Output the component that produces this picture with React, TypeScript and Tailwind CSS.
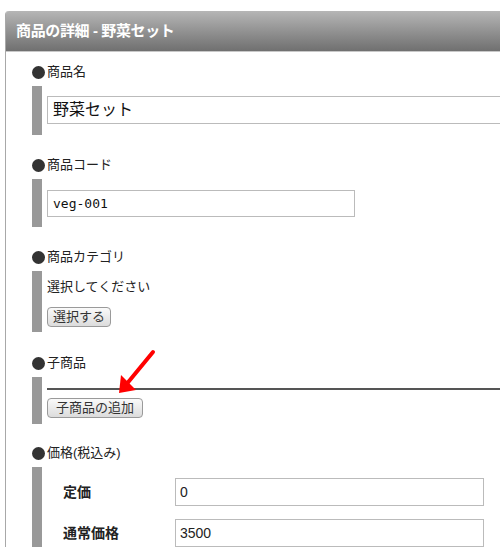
import React from 'react';

const font = { fontFamily: '"Liberation Sans", "Noto Sans CJK JP", sans-serif' };

const Label: React.FC<{ text: string }> = ({ text }) => (
  <div className="flex items-center h-[20px] text-[13px] text-[#222]">
    <span className="w-[13px] h-[13px] rounded-full bg-[#333] mr-[2px]" />
    <span>{text}</span>
  </div>
);

const Bar: React.FC<{ className?: string; children: React.ReactNode }> = ({ className, children }) => (
  <div className="flex mt-[4px]">
    <div className="w-[10px] bg-[#999] shrink-0" />
    <div className={`pl-[5px] flex-1 ${className ?? ''}`}>{children}</div>
  </div>
);

const Button: React.FC<{ text: string; width: string }> = ({ text, width }) => (
  <button
    className={`${width} h-[20px] border border-[#9a9a9a] rounded-[4px] bg-gradient-to-b from-[#fafafa] to-[#dcdcdc] text-[13px] text-[#333] leading-[18px] flex items-center justify-center`}
  >
    {text}
  </button>
);

const PriceRow: React.FC<{ label: string; value: string; first?: boolean }> = ({ label, value, first }) => (
  <div className={`flex items-center ${first ? '' : 'mt-[13px]'}`}>
    <div className="w-[128px] pl-[16px] text-[14px] font-bold text-[#222]">{label}</div>
    <div className="w-[309px] h-[28px] border border-[#bbb] flex items-center px-[4px] text-[14px] text-[#222]">
      {value}
    </div>
  </div>
);

const App: React.FC = () => {
  return (
    <div className="relative w-[500px] h-[547px] overflow-hidden bg-white" style={font}>
      <div className="mt-[11px] ml-[5px] border-l border-[#a8a8a8] rounded-tl-[4px] h-[560px]">
        {/* Header */}
        <div className="h-[41px] rounded-tl-[3px] bg-gradient-to-b from-[#b6b6b6] to-[#707070] border-b border-[#c8c8c8] flex items-center px-[10px]">
          <h1 className="text-white font-bold text-[15px] tracking-tight">商品の詳細 - 野菜セット</h1>
        </div>

        <div className="pl-[26px] pt-[10px]">
          {/* 商品名 */}
          <Label text="商品名" />
          <Bar className="pt-[10px] pb-[11px]">
            <div className="w-[470px] h-[28px] border border-[#bbb] flex items-center px-[5px] text-[16px] text-[#111]">
              野菜セット
            </div>
          </Bar>

          {/* 商品コード */}
          <div className="mt-[20px]">
            <Label text="商品コード" />
            <Bar className="pt-[11px] pb-[10px]">
              <div
                className="w-[308px] h-[27px] border border-[#bbb] flex items-center px-[5px] text-[13px] text-[#111]"
                style={{ fontFamily: '"DejaVu Sans Mono", monospace' }}
              >
                veg-001
              </div>
            </Bar>
          </div>

          {/* 商品カテゴリ */}
          <div className="mt-[20px]">
            <Label text="商品カテゴリ" />
            <Bar className="pt-[6px] pb-[5px]">
              <div className="h-[20px] text-[13px] text-[#222] leading-[20px]">選択してください</div>
              <div className="mt-[10px]">
                <Button text="選択する" width="w-[64px]" />
              </div>
            </Bar>
          </div>

          {/* 子商品 */}
          <div className="mt-[21px]">
            <Label text="子商品" />
            <Bar className="pt-[11px] pb-[6px]">
              <div className="h-[2px] bg-[#555]" />
              <div className="mt-[8px]">
                <Button text="子商品の追加" width="w-[96px]" />
              </div>
            </Bar>
          </div>

          {/* 価格 */}
          <div className="mt-[19px]">
            <Label text="価格(税込み)" />
            <Bar className="pt-[11px] pb-[20px]">
              <PriceRow label="定価" value="0" first />
              <PriceRow label="通常価格" value="3500" />
            </Bar>
          </div>
        </div>
      </div>

      {/* red annotation arrow */}
      <svg className="absolute left-0 top-0 pointer-events-none" width="500" height="547">
        <line x1="153" y1="352" x2="125" y2="386" stroke="#ff0000" strokeWidth="4" strokeLinecap="round" />
        <polygon points="119,393 121,375 136,390" fill="#ff0000" />
      </svg>
    </div>
  );
};

export default App;
